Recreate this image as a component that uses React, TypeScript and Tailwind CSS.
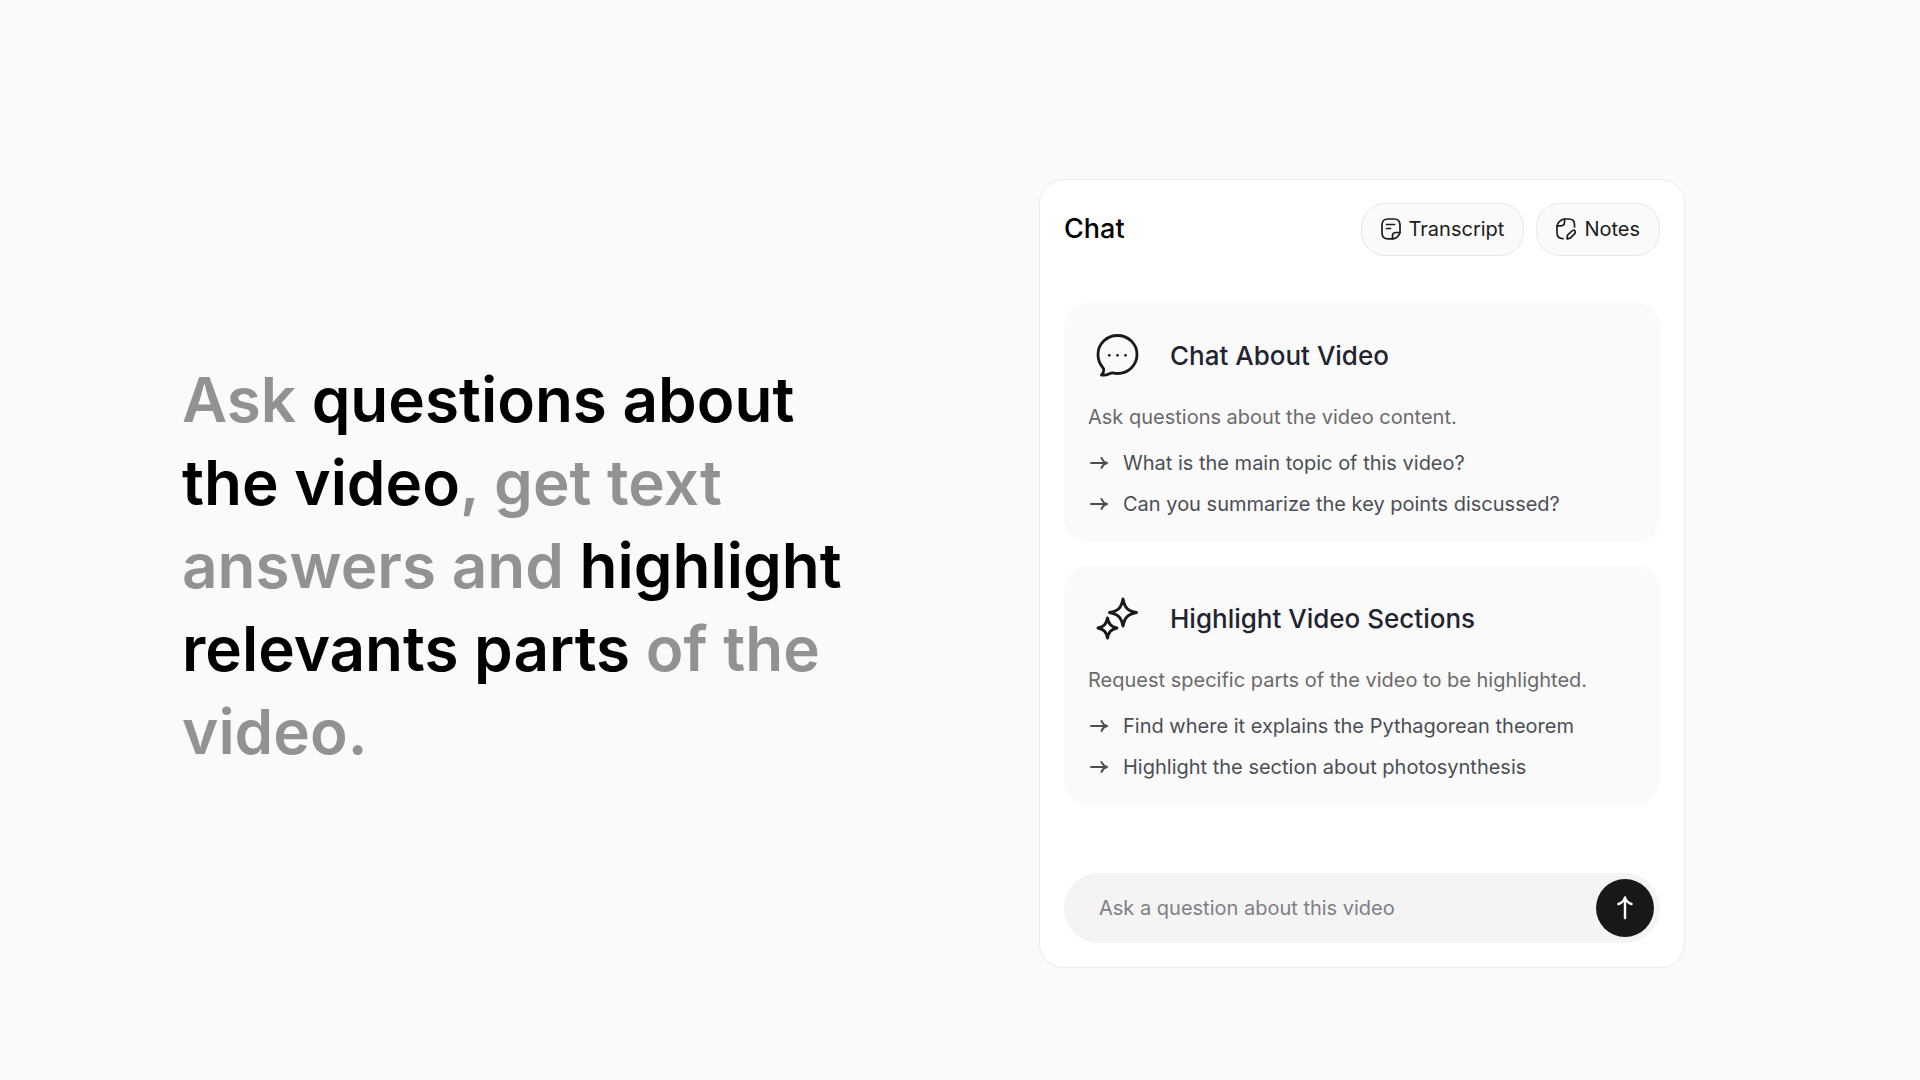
import type { ReactNode } from "react";

function TranscriptIcon() {
  return (
    <svg width="20" height="22" viewBox="0 0 20 22" fill="none" stroke="currentColor" strokeWidth="1.7" strokeLinecap="round" strokeLinejoin="round" aria-hidden="true">
      <path d="M11.5 20.8H7C3 20.8 1 18.8 1 14.8V7C1 3 3 1 7 1h6c4 0 6 2 6 6v7.5c-.5 3-4 6.3-7.5 6.3Z" />
      <path d="M11.5 20.8V18c0-2.300 1.2-3.5 3.5-3.5h4" />
      <path d="M5.5 6.5h8M5.5 10.5h4" />
    </svg>
  );
}

function NotesIcon() {
  return (
    <svg width="20" height="22" viewBox="0 0 20 22" fill="none" stroke="currentColor" strokeWidth="1.7" strokeLinecap="round" strokeLinejoin="round" aria-hidden="true">
      <path d="M18.5 9V6.500C18.5 2.800 16.700 1 13 1H8.500C5 1.500 1.500 4.500 1 8v6.500c0 4 2 6.200 6 6.200" />
      <path d="M1 7.800h4c2.400 0 3.500-1.100 3.500-3.500V1" />
      <path d="M11 20.800l.5-3.600 4.400-4.200c1-1 2.200-1 2.900-.2.800.8.700 2-.3 3l-4.200 4.300-3.300.7Z" />
    </svg>
  );
}

function ChatIcon() {
  return (
    <svg width="44" height="44" viewBox="0 0 44 44" fill="none" stroke="currentColor" strokeWidth="2.8" strokeLinecap="round" strokeLinejoin="round" aria-hidden="true">
      <path d="M22.500 1.500c10.800 0 19.500 8.500 19.500 19s-8.700 19-19.500 19c-1.600 0-3.200-.2-4.700-.6-1.300-.3-2.300.3-3.500.9-2.600 1.300-5.500 1.600-7.900 1.200 1.600-1.600 2.500-3.500 2.400-5.300-.1-1.200-.8-2-1.500-2.900C4.700 29.600 3 25.400 3 20.500c0-10.500 8.700-19 19.500-19Z" />
      <path d="M14.300 21.300h.02M22.500 21.300h.02M30.500 21.300h.02" />
    </svg>
  );
}

function SparklesIcon() {
  return (
    <svg width="44" height="44" viewBox="0 0 44 44" fill="none" stroke="currentColor" strokeWidth="3" strokeLinecap="round" strokeLinejoin="round" aria-hidden="true">
      <path d="M28 2c1.700 8.700 4.600 12 13.500 13.500-8.900 1.800-11.800 5-13.500 13.500-1.700-8.500-4.600-11.700-13.500-13.500 8.900-1.500 11.800-4.800 13.500-13.500Z" />
      <path d="M12.500 21c1.200 6.100 3.300 8.500 9.500 10-6.200 1.500-8.300 3.900-9.500 10-1.200-6.100-3.300-8.500-9.500-10 6.200-1.500 8.300-3.900 9.500-10Z" />
    </svg>
  );
}

function ArrowRight() {
  return (
    <svg className="shrink-0" width="20" height="16" viewBox="0 0 20 16" fill="none" stroke="currentColor" strokeWidth="2" strokeLinecap="round" strokeLinejoin="round" aria-hidden="true">
      <path d="M3 8h16M13.500 3c.8 2 2.500 4.200 5.500 5-3 .8-4.700 3-5.500 5" />
    </svg>
  );
}

function PillButton({ icon, children }: { icon: ReactNode; children: ReactNode }) {
  return (
    <button type="button" className="flex h-[53px] items-center gap-2 rounded-3xl border border-[#e8e8e8] bg-[#fafafa] px-[19px] text-xl text-[#1b1b1b]">
      {icon}
      {children}
    </button>
  );
}

type CardProps = {
  icon: ReactNode;
  title: string;
  description: string;
  prompts: string[];
};

function PromptCard({ icon, title, description, prompts }: CardProps) {
  return (
    <section className="rounded-3xl bg-[#fafafa] p-6">
      <div className="flex items-center gap-6">
        <div className="flex size-[58px] items-center justify-center text-[#18191b]">{icon}</div>
        <h3 className="text-[26px] font-medium text-[#1f2430]">{title}</h3>
      </div>
      <p className="mt-[18px] text-xl leading-7 text-[#6a6a6a]">{description}</p>
      <ul className="mt-[18px] flex flex-col gap-[13px]">
        {prompts.map((prompt) => (
          <li key={prompt}>
            <button type="button" className="flex items-center gap-[15px] text-left text-xl leading-7 text-[#4b4e55]">
              <ArrowRight />
              {prompt}
            </button>
          </li>
        ))}
      </ul>
    </section>
  );
}

const cards: CardProps[] = [
  {
    icon: <ChatIcon />,
    title: "Chat About Video",
    description: "Ask questions about the video content.",
    prompts: ["What is the main topic of this video?", "Can you summarize the key points discussed?"],
  },
  {
    icon: <SparklesIcon />,
    title: "Highlight Video Sections",
    description: "Request specific parts of the video to be highlighted.",
    prompts: ["Find where it explains the Pythagorean theorem", "Highlight the section about photosynthesis"],
  },
];

function ChatPanel() {
  return (
    <div className="w-[646px] shrink-0 rounded-3xl border border-[#ebebeb] bg-white p-6 pt-[23px] font-['Inter','Liberation_Sans',sans-serif]">
      <header className="flex items-center justify-between">
        <h2 className="text-[27px] font-medium text-black">Chat</h2>
        <div className="flex gap-3">
          <PillButton icon={<TranscriptIcon />}>Transcript</PillButton>
          <PillButton icon={<NotesIcon />}>Notes</PillButton>
        </div>
      </header>

      <div className="mt-[47px] flex flex-col gap-6">
        {cards.map((card) => (
          <PromptCard key={card.title} {...card} />
        ))}
      </div>

      <form className="mt-[68px] flex h-[70px] items-center rounded-full bg-[#f4f4f4] pr-[6px] pl-[35px]">
        <input
          type="text"
          aria-label="Ask a question about this video"
          placeholder="Ask a question about this video"
          className="min-w-0 flex-1 bg-transparent text-xl text-[#1b1b1b] outline-none placeholder:text-[#7d8087]"
        />
        <button type="button" aria-label="Send" className="flex size-[58px] items-center justify-center rounded-full bg-[#17181a] text-white">
          <svg width="20" height="26" viewBox="0 0 20 26" fill="none" stroke="currentColor" strokeWidth="2.4" strokeLinecap="round" strokeLinejoin="round" aria-hidden="true">
            <path d="M10 23V2.500M3.500 9c3-1 5.500-3.200 6.500-6.500 1 3.300 3.500 5.500 6.500 6.500" />
          </svg>
        </button>
      </form>
    </div>
  );
}

export default function App() {
  return (
    <main className="flex min-h-screen items-center justify-between gap-16 bg-[#fafafa] pt-[66px] pr-[235px] pl-[182px]">
      <h1 className="max-w-[690px] pb-4 font-['Inter','Liberation_Sans',sans-serif] text-[62px] leading-[83px] font-semibold text-[#929292]">
        Ask <span className="text-black">questions about the video</span>, get text answers and{" "}
        <span className="text-black">highlight relevants parts</span> of the video.
      </h1>
      <ChatPanel />
    </main>
  );
}
